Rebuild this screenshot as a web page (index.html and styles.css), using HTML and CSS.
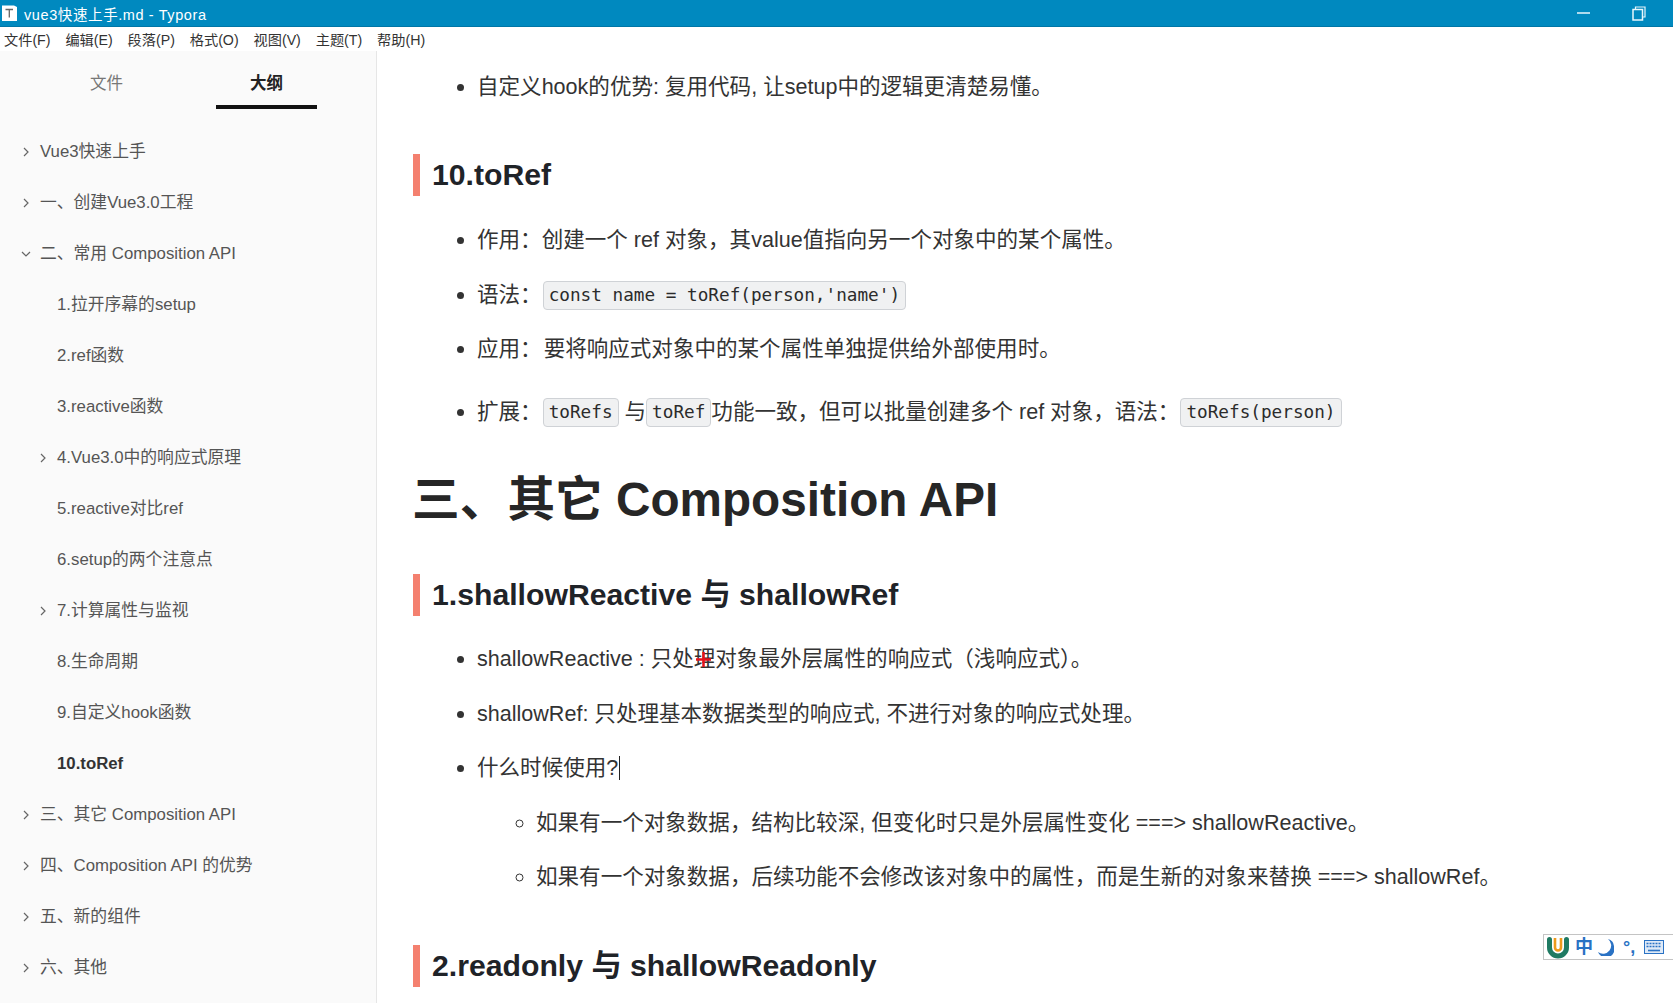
FILE: index.html
```html
<!DOCTYPE html>
<html lang="zh-CN">

<head>
    <meta charset="UTF-8">
    <title>vue3快速上手.md - Typora</title>
    <link rel="stylesheet" href="styles.css">
</head>

<body>
    <div class="titlebar">
        <svg class="app-icon" width="17" height="18" viewBox="0 0 17 18">
            <path d="M1 1.500h12l3 1.500v14h-15z" fill="#fff" />
            <path d="M4.500 5.500h7.500M8.300 5.500v8" stroke="#666" stroke-width="1.300" fill="none" />
        </svg>
        <span class="title-text">vue3快速上手.md - Typora</span>
        <div class="win-controls">
            <svg width="13" height="4" viewBox="0 0 13 4">
                <path d="M0 2h13" stroke="#e8f6fc" stroke-width="1.500" />
            </svg>
            <svg width="14" height="15" viewBox="0 0 14 15">
                <path d="M3.500 3V1h9.500v10h-2.500" stroke="#e8f6fc" stroke-width="1.200" fill="none" />
                <rect x="1" y="3.500" width="9.500" height="10.500" stroke="#e8f6fc" stroke-width="1.500" fill="none" />
            </svg>
        </div>
    </div>

    <div class="menubar">
        <span>文件(F)</span>
        <span>编辑(E)</span>
        <span>段落(P)</span>
        <span>格式(O)</span>
        <span>视图(V)</span>
        <span>主题(T)</span>
        <span>帮助(H)</span>
    </div>

    <div class="main">
        <div class="sidebar">
            <div class="tabs">
                <div class="tab">文件</div>
                <div class="tab active">大纲</div>
            </div>
            <div class="outline">
                <div class="row"><svg class="chev" viewBox="0 0 10 10"><path d="M3 1l4 4-4 4" /></svg>Vue3快速上手</div>
                <div class="row"><svg class="chev" viewBox="0 0 10 10"><path d="M3 1l4 4-4 4" /></svg>一、创建Vue3.0工程</div>
                <div class="row"><svg class="chev" viewBox="0 0 10 10"><path d="M1 3l4 4 4-4" /></svg>二、常用 Composition API</div>
                <div class="row sub">1.拉开序幕的setup</div>
                <div class="row sub">2.ref函数</div>
                <div class="row sub">3.reactive函数</div>
                <div class="row sub"><svg class="chev" viewBox="0 0 10 10"><path d="M3 1l4 4-4 4" /></svg>4.Vue3.0中的响应式原理</div>
                <div class="row sub">5.reactive对比ref</div>
                <div class="row sub">6.setup的两个注意点</div>
                <div class="row sub"><svg class="chev" viewBox="0 0 10 10"><path d="M3 1l4 4-4 4" /></svg>7.计算属性与监视</div>
                <div class="row sub">8.生命周期</div>
                <div class="row sub">9.自定义hook函数</div>
                <div class="row sub current">10.toRef</div>
                <div class="row"><svg class="chev" viewBox="0 0 10 10"><path d="M3 1l4 4-4 4" /></svg>三、其它 Composition API</div>
                <div class="row"><svg class="chev" viewBox="0 0 10 10"><path d="M3 1l4 4-4 4" /></svg>四、Composition API 的优势</div>
                <div class="row"><svg class="chev" viewBox="0 0 10 10"><path d="M3 1l4 4-4 4" /></svg>五、新的组件</div>
                <div class="row"><svg class="chev" viewBox="0 0 10 10"><path d="M3 1l4 4-4 4" /></svg>六、其他</div>
            </div>
        </div>

        <div class="content">
            <ul class="first-list">
                <li>自定义hook的优势: 复用代码, 让setup中的逻辑更清楚易懂。</li>
            </ul>

            <h2 class="h-toref">10.toRef</h2>
            <ul>
                <li>作用：创建一个 ref 对象，其value值指向另一个对象中的某个属性。</li>
                <li>语法：<code>const name = toRef(person,'name')</code></li>
                <li><span class="label">应用：</span>要将响应式对象中的某个属性单独提供给外部使用时。</li>
                <li class="wide">扩展：<code>toRefs</code> 与<code class="tight">toRef</code>功能一致，但可以批量创建多个 ref 对象，语法：<code>toRefs(person)</code></li>
            </ul>

            <h1>三、其它 Composition API</h1>

            <h2>1.shallowReactive 与 shallowRef</h2>
            <ul>
                <li>shallowReactive : 只处理对象最外层属性的响应式（浅响应式）。</li>
                <li>shallowRef: 只处理基本数据类型的响应式, 不进行对象的响应式处理。</li>
                <li>什么时候使用?<span class="caret"></span>
                    <ul class="nested">
                        <li>如果有一个对象数据，结构比较深, 但变化时只是外层属性变化 ===&gt; shallowReactive。</li>
                        <li>如果有一个对象数据，后续功能不会修改该对象中的属性，而是生新的对象来替换 ===&gt; shallowRef。</li>
                    </ul>
                </li>
            </ul>

            <h2 class="h-last">2.readonly 与 shallowReadonly</h2>
        </div>
    </div>

    <!-- mouse pointer -->
    <svg class="pointer" width="15" height="15" viewBox="0 0 15 15">
        <path d="M7.500 0v15M0 7.500h15" stroke="#e5101a" stroke-width="2.500" />
    </svg>

    <!-- input method bar -->
    <div class="ime">
        <svg width="24" height="24" viewBox="0 0 24 24">
            <path d="M3.500 4.500v8a8.500 8.500 0 0 0 17 0v-8" fill="none" stroke="#1f7a62" stroke-width="5" stroke-linecap="round" />
            <path d="M9 3v9.500a3 3 0 0 0 6 0V3" fill="none" stroke="#ee9a1c" stroke-width="2.600" />
        </svg>
        <span class="ime-zh">中</span>
        <svg width="16" height="17" viewBox="0 0 16 17">
            <path d="M10 0a8 8 0 0 1-10 13a8.500 8.500 0 0 0 16-6a8 8 0 0 0-6-7z" fill="#2a72c4" />
        </svg>
        <span class="ime-punct">°,</span>
        <svg width="20" height="14" viewBox="0 0 20 14">
            <rect x="0.500" y="0.500" width="19" height="13" fill="#dfeaf7" stroke="#2a72c4" />
            <path d="M2.500 3.500h15M2.500 6.500h15" stroke="#2a72c4" stroke-width="1.600" stroke-dasharray="2 1" />
            <path d="M4 10.500h12" stroke="#2a72c4" stroke-width="1.600" />
        </svg>
    </div>
</body>

</html>
```

FILE: styles.css
```css
* {
    box-sizing: border-box;
}

html,
body {
    height: 100%;
}

body {
    margin: 0;
    display: flex;
    flex-direction: column;
    overflow: hidden;
    position: relative;
    background: #fff;
    font-family: "Liberation Sans", "Noto Sans CJK SC", sans-serif;
    color: #333;
}

.titlebar {
    height: 27px;
    flex: none;
    display: flex;
    align-items: center;
    padding-left: 1px;
    background: #0089bf;
    border-bottom: 1px solid #0076a6;
    color: #fff;
}

.title-text {
    margin-left: 6px;
    font-size: 14.500px;
    letter-spacing: 0.600px;
}

.win-controls {
    margin-left: auto;
    display: flex;
    align-items: center;
    gap: 42px;
    padding-right: 27px;
}

.menubar {
    height: 24px;
    flex: none;
    display: flex;
    align-items: center;
    gap: 14.900px;
    padding-left: 4px;
    font-size: 14.200px;
    color: #333;
}

.main {
    flex: 1;
    display: flex;
    min-height: 0;
}

.sidebar {
    width: 377px;
    flex: none;
    background: #fafafa;
    border-right: 1px solid #e6e6e6;
}

.tabs {
    height: 58px;
    display: flex;
    padding-left: 56px;
    gap: 59px;
}

.tab {
    width: 101px;
    height: 58px;
    padding-top: 21px;
    text-align: center;
    font-size: 16.500px;
    line-height: 22px;
    color: #777;
}

.tab.active {
    color: #222;
    font-weight: bold;
    border-bottom: 4px solid #111;
}

.outline {
    padding-top: 17px;
}

.row {
    height: 51px;
    display: flex;
    align-items: center;
    padding-left: 40px;
    font-size: 16.800px;
    line-height: 24px;
    color: #555;
    position: relative;
}

.row.sub {
    padding-left: 57px;
}

.row.current {
    font-weight: bold;
    color: #333;
}

.chev {
    width: 10px;
    height: 10px;
    position: absolute;
    left: 21px;
    top: 21px;
    fill: none;
    stroke: #666;
    stroke-width: 1.200;
}

.row.sub .chev {
    left: 38px;
}

.content {
    flex: 1;
    min-width: 0;
    overflow: hidden;
    padding-left: 36px;
    font-size: 21.550px;
    line-height: 30px;
}

ul {
    margin: 0;
    padding-left: 64px;
}

li+li {
    margin-top: 24.500px;
}

li.wide {
    margin-top: 33px;
}

.first-list {
    margin-top: 21px;
}

.label {
    margin-right: 2px;
}

h2 {
    height: 42px;
    margin: 44px 0 28px;
    padding-left: 12px;
    border-left: 7px solid #f4806f;
    font-size: 30.200px;
    line-height: 42px;
    font-weight: bold;
    color: #1f2328;
}

h2.h-toref {
    margin-top: 52px;
    margin-bottom: 29px;
}

h2.h-last {
    margin-top: 53px;
}

h1 {
    height: 60px;
    margin: 43px 0 0 -1px;
    font-size: 47.700px;
    line-height: 60px;
    font-weight: bold;
    color: #262626;
}

code {
    display: inline-block;
    height: 29px;
    margin: 1px 0 0 1px;
    padding: 0 5px;
    border: 1px solid #cfd2d6;
    border-radius: 4px;
    background: #f0f1f2;
    font-family: "DejaVu Sans Mono", monospace;
    font-size: 17.700px;
    line-height: 27px;
    vertical-align: top;
    color: #2b2b2b;
}

code.tight {
    margin-left: 0;
}

.nested {
    list-style: circle;
    margin-top: 24.500px;
    padding-left: 59px;
}

.caret {
    display: inline-block;
    width: 1px;
    height: 24px;
    margin-left: 1px;
    background: #222;
    vertical-align: -5px;
}

.pointer {
    position: absolute;
    left: 696px;
    top: 652px;
}

.ime {
    position: absolute;
    left: 1543px;
    top: 934px;
    width: 130px;
    height: 26px;
    display: flex;
    align-items: center;
    gap: 5px;
    padding-left: 2px;
    background: #fff;
    border: 1px solid #c4c4c4;
    border-right: none;
}

.ime-zh {
    font-size: 18px;
    line-height: 22px;
    font-weight: bold;
    color: #2a72c4;
}

.ime-punct {
    width: 20px;
    padding-left: 4px;
    font-size: 18px;
    line-height: 20px;
    font-weight: bold;
    color: #2a72c4;
}
```
